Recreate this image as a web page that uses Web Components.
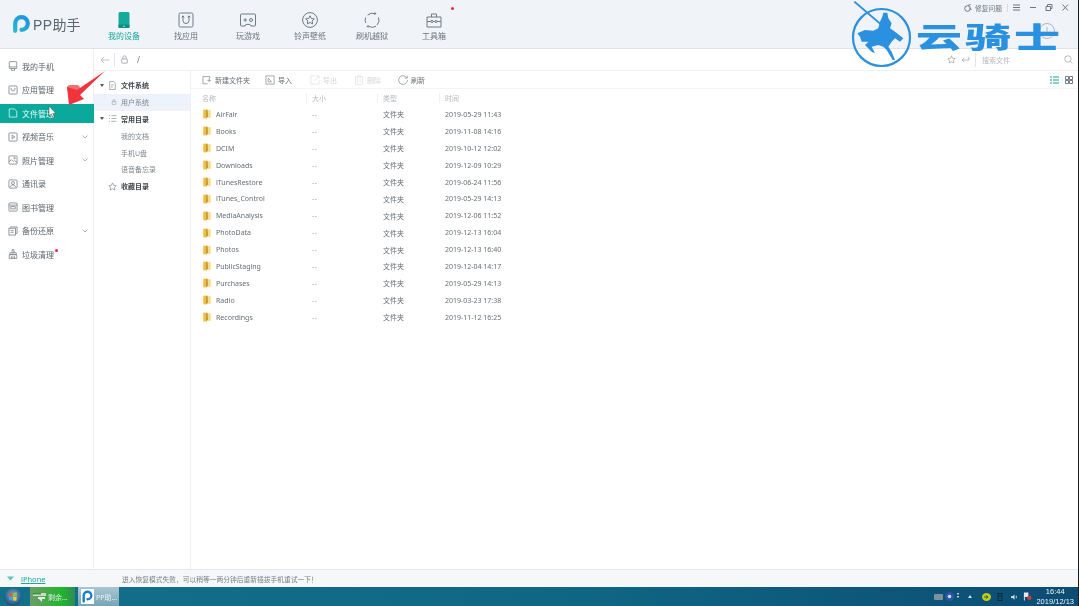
<!DOCTYPE html>
<html lang="zh">
<head>
<meta charset="utf-8">
<title>PP助手</title>
<style>
    html, body { margin: 0; height: 100%; background: #1a1a1a; overflow: hidden; }
    body { font-family: "Noto Sans", "Noto Sans CJK SC", sans-serif; font-size: 8px; color: #555; }
    #page { width: 1078px; height: 606px; display: flex; flex-direction: column; filter: blur(0.4px); background: #fff; position: relative; overflow: hidden; }
    #middle { flex: 1; display: flex; min-height: 0; }
</style>
</head>
<body>
<div id="page">
    <pp-topbar></pp-topbar>
    <div id="middle">
        <pp-sidebar></pp-sidebar>
        <pp-browser></pp-browser>
    </div>
    <pp-status></pp-status>
    <pp-taskbar></pp-taskbar>
    <pp-overlay></pp-overlay>
</div>

<script>
// all icons in one place, drawn on a 16x16 box unless the caller says otherwise
const ICONS = {
    device: '<rect x="2.5" y="0" width="11" height="16" rx="1.5" fill="#16a99c"/><rect x="2.5" y="12.6" width="11" height="3.4" rx="1" fill="#0b8f86"/><rect x="7" y="13.8" width="2" height="1" fill="#8fdcd5"/>',
    app: '<rect x="1" y="1" width="14" height="14" rx="1.5"/><path d="M5 4v4.5a3 3 0 0 0 6 0V4"/><path d="M3.8 5.4 5 3.8l1.2 1.6M9.8 5.4 11 3.8l1.2 1.6"/>',
    game: '<path d="M1.5 2h13a1 1 0 0 1 1 1v10a1 1 0 0 1-1 1h-3.5l-1-1.6H6L5 14H1.5a1 1 0 0 1-1-1V3a1 1 0 0 1 1-1z"/><path d="M3.5 8h3.4M5.2 6.3v3.4"/><circle cx="11" cy="8" r="1.5"/>',
    ring: '<circle cx="8" cy="8" r="7.4"/><path d="m8 3.8 1.3 2.7 3 .4-2.2 2 .6 3L8 10.5l-2.7 1.4.6-3-2.2-2 3-.4z"/>',
    flash: '<path d="M3.6 3.2A7 7 0 0 1 11 1.7M14.5 5.5a7 7 0 0 1-1.5 7.5M12 14.3A7 7 0 0 1 4.7 14.3M1.7 11a7 7 0 0 1 0-5.5"/><path d="m10.6 0 2 1.8-2.4 1.2zM4.5 16l-2.2-1.8 2.4-1.2z" fill="#6f7a82" stroke="none"/>',
    tools: '<path d="M1 5h14v10H1zM5.5 5V2h5v3M1 9.5h4M11 9.5h4M7.2 9.5h1.6"/><circle cx="6" cy="9.5" r="1.1"/><circle cx="10" cy="9.5" r="1.1"/>',
    phone: '<rect x="2" y="1" width="12" height="11" rx="1"/><path d="M5.5 12v3h5v-3M2 9.5h12"/>',
    bag: '<rect x="1.5" y="1.5" width="13" height="13" rx="1.5"/><path d="M5 4.5v2a3 3 0 0 0 6 0v-2"/>',
    file: '<path d="M2 1.5h8l4 3.5v9.5H2z"/>',
    play: '<rect x="1.5" y="1.5" width="13" height="13" rx="1"/><path d="m6.5 5 4.5 3-4.500 3z"/>',
    photo: '<rect x="1.5" y="1.5" width="13" height="13" rx="1"/><path d="m1.5 11 4-3.5 3 3 2-1.5 4 3"/><circle cx="10.5" cy="5" r="1.2"/>',
    contact: '<rect x="1.5" y="1.5" width="13" height="13" rx="1.5"/><circle cx="8" cy="6.5" r="2.4"/><path d="M3.8 13c.6-2.5 2.2-3.6 4.2-3.6s3.6 1.1 4.2 3.6"/>',
    book: '<rect x="1.5" y="1.5" width="13" height="13" rx="1"/><path d="M1.5 5h13"/><rect x="4.5" y="7.5" width="7" height="3.5"/>',
    backup: '<path d="M4 3V1.5h10.5V12H12"/><rect x="1.5" y="3.5" width="10.5" height="11"/><path d="M4 7h5M4 10h5"/>',
    clean: '<path d="M6.5 1h3v5h-3zM3 6h10v3H3zM2 9h12v6H2zM5.5 11.5V15M8 11.5V15M10.5 11.5V15"/>',
    doc: '<path d="M3 1h7l3 3v11H3z"/><path d="M5.5 7h5M5.5 10.5h3"/>',
    list: '<path d="M6 3h9M6 8h9M6 13h9"/><path d="M1.5 3h2M1.5 8h2M1.5 13h2"/>',
    star: '<path d="m8 1.5 2 4.300 4.700.6-3.400 3.200.9 4.700L8 12l-4.200 2.300.9-4.700L1.300 6.400 6 5.800z"/>',
    lock: '<rect x="3" y="7" width="10" height="7.5" rx="1"/><path d="M5 7V4.5a3 3 0 0 1 6 0V7"/>',
    back: '<path d="M15 8H1.5M6.5 3l-5 5 5 5"/>',
    enter: '<path d="M14 3v6H2M5.5 5.5 2 9l3.500 3.500"/>',
    search: '<circle cx="7" cy="7" r="5.7"/><path d="m11 11 4 4"/>',
    newdir: '<path d="M1.5 14V2.500h11v3M1.500 14H9"/><path d="M8.500 8.500h6M11.500 5.500v6"/>',
    import: '<rect x="1.5" y="1.5" width="13" height="13"/><path d="m5 5 5.500 5.500M5 5.500V11h5.500"/>',
    export: '<path d="M8 1.500H1.500v13h13V8"/><path d="m7 9 7.500-7.500M10 1.500h4.500V6"/>',
    trash: '<path d="M1 3.500h14M5.500 3.500V1.500h5v2M2.500 3.500V15h11V3.500M6 6.500v6M10 6.500v6"/>',
    refresh: '<path d="M14 4.500A7 7 0 1 0 15 8"/><path d="M14.800 1v4h-4"/>',
    folder: '<path d="M2 1h5.500v14H2z" fill="#eebf45"/><path d="M7 2h7v12H7z" fill="#f6dc8a"/><path d="M6.500 1H9l.6 11-3.100 3z" fill="#c9982c"/>'
};

function icon(name, size, color, width) {
    return `<svg viewBox="0 0 16 16" width="${size}" height="${size}" fill="none" stroke="${color || '#6f7a82'}" stroke-width="${width || 1}" style="display:block;flex:none">${ICONS[name]}</svg>`;
}

class PPTopbar extends HTMLElement {
    constructor() {
        super();
        const shadow = this.attachShadow({ mode: 'open' });
        const items = [
            ['device', '我的设备', true], ['app', '找应用'], ['game', '玩游戏'],
            ['ring', '铃声壁纸'], ['flash', '刷机越狱'], ['tools', '工具箱', false, true]
        ];
        shadow.innerHTML = `
            <style>
                :host { display: flex; flex: none; height: 49px; box-sizing: border-box; background: #f0f3f7; border-bottom: 1px solid #dfe3e8; }
                .logo { width: 93px; box-sizing: border-box; margin-top: 15px; padding-left: 13px; display: flex; gap: 3px; height: 18px; align-items: center; color: #5b6670; font-size: 14px; }
                .logo svg { display: block; flex: none; }
                .logo b { font-family: "Liberation Sans", sans-serif; font-weight: normal; letter-spacing: .4px; }
                nav { display: flex; }
                .item { width: 62px; display: flex; flex-direction: column; align-items: center; padding-top: 12px; gap: 2px; font-size: 8px; color: #6c757c; position: relative; }
                .item.on { color: #14a79a; }
                .dot { position: absolute; left: 48px; top: 7px; width: 3px; height: 3px; border-radius: 50%; background: #f0243a; }
                .right { margin-left: auto; padding: 3px 9px 0 0; display: flex; flex-direction: column; align-items: flex-end; }
                .controls { display: flex; align-items: center; color: #70777e; font-size: 6.75px; height: 9px; }
                .controls span.sep { width: 1px; height: 8px; background: #d8dce0; margin: 0 5px; }
                .controls svg { margin-right: 8px; }
                .controls svg:last-child { margin-right: 0; }
                .down { margin: 11px 14px 0 0; }
            </style>
            <div class="logo">
                <svg width="17" height="18" viewBox="0 0 17 18" fill="none"><defs><linearGradient id="lg" gradientUnits="userSpaceOnUse" x1="0" y1="18" x2="17" y2="0"><stop offset="0" stop-color="#2cbccb"/><stop offset="1" stop-color="#1b8de6"/></linearGradient></defs><path d="M2.2 15.8V8.500a6.300 6.300 0 1 1 6.300 6.300" stroke="url(#lg)" stroke-width="4.2" stroke-linecap="round"/></svg>
                <span><b>PP</b>助手</span>
            </div>
            <nav>${items.map(([ic, label, on, dot]) => `
                <div class="item ${on ? 'on' : ''}">
                    ${ic === 'device' ? icon(ic, 16, 'none') : icon(ic, 16)}
                    <span>${label}</span>
                    ${dot ? '<i class="dot"></i>' : ''}
                </div>`).join('')}
            </nav>
            <div class="right">
                <div class="controls">
                    <svg style="margin-right:3px" width="8" height="8" viewBox="0 0 8 8" fill="none" stroke="#70777e"><circle cx="3.5" cy="4.5" r="2.8"/><path d="M4 1.5 6.500.5M5.500 4 7.500 6"/></svg>
                    <span>修复问题</span><span class="sep"></span>
                    <svg width="8" height="7" viewBox="0 0 8 7" stroke="#70777e"><path d="M0 1h7M0 3.500h7M0 6h7"/></svg>
                    <svg width="8" height="7" viewBox="0 0 8 7" stroke="#70777e"><path d="M1 3.500h6"/></svg>
                    <svg width="8" height="7" viewBox="0 0 8 7" fill="none" stroke="#70777e"><path d="M1 2.500h4.500v4H1zM2.500 2.500V.5H7v4H5.500"/></svg>
                    <svg width="8" height="7" viewBox="0 0 8 7" stroke="#70777e"><path d="m1.500 .5 5.500 6M7 .5l-5.500 6"/></svg>
                </div>
                <svg class="down" width="16" height="16" viewBox="0 0 16 16" fill="none" stroke="#b0b6bc"><circle cx="8" cy="8" r="7.5"/><path d="M8 4v7M5 8.500l3 3 3-3"/></svg>
            </div>
        `;
    }
}

class PPSidebar extends HTMLElement {
    constructor() {
        super();
        const shadow = this.attachShadow({ mode: 'open' });
        const items = [
            ['phone', '我的手机'], ['bag', '应用管理'], ['file', '文件管理'], ['play', '视频音乐', 'more'],
            ['photo', '照片管理', 'more'], ['contact', '通讯录'], ['book', '图书管理'],
            ['backup', '备份还原', 'more'], ['clean', '垃圾清理']
        ];
        shadow.innerHTML = `
            <style>
                :host { display: block; flex: none; width: 94px; box-sizing: border-box; padding-top: 5.5px; border-right: 1px solid #eef0f3; color: #596269; font-size: 8px; }
                .row { height: 23.5px; display: flex; align-items: center; padding: 0 3px 0 8px; gap: 4px; position: relative; box-sizing: border-box; }
                .row.on { background: #0aa99b; color: #e8fbf8; margin-right: -1px; height: 19.5px; margin-top: 2px; margin-bottom: 2px; }
                .chev { margin-left: auto; margin-right: 2px; }
                .badge { position: absolute; left: 67px; top: 7px; width: 13px; height: 7px; border-radius: 4px; background: #ef6f6a; }
                .dot { position: absolute; left: 55px; top: 6px; width: 3px; height: 3px; border-radius: 50%; background: #f0243a; }
            </style>
            ${items.map(([ic, label, more], i) => `
                <div class="row ${i === 2 ? 'on' : ''}">
                    ${icon(ic, 10, i === 2 ? '#d7f5f1' : '#7b848b', 1.3)}
                    <span>${label}</span>
                    ${more ? '<svg class="chev" width="6" height="4" viewBox="0 0 6 4" fill="none" stroke="#b0b6bb"><path d="m.5.5 2.500 2.500L5.500.5"/></svg>' : ''}
                    ${i === 1 ? '<i class="badge"></i>' : ''}
                    ${i === 8 ? '<i class="dot"></i>' : ''}
                </div>`).join('')}
        `;
    }
}

class PPBrowser extends HTMLElement {
    constructor() {
        super();
        const shadow = this.attachShadow({ mode: 'open' });
        shadow.innerHTML = `
            <style>
                :host { display: flex; flex-direction: column; flex: 1; min-width: 0; }
                .address { flex: none; height: 22px; box-sizing: border-box; border-bottom: 1px solid #eef0f3; display: flex; align-items: center; padding: 0 5px 0 6px; color: #777; font-size: 8px; }
                .address .sep { width: 1px; height: 14px; background: #e2e5e8; }
                .tail { margin-left: auto; display: flex; align-items: center; }
                .search { color: #b4b9be; font-size: 7px; width: 82px; margin-left: 6px; }
                .panes { flex: 1; display: flex; min-height: 0; }
            </style>
            <div class="address">
                ${icon('back', 10, '#9aa1a7')}
                <span class="sep" style="margin:0 5px 0 4px"></span>
                ${icon('lock', 9, '#6f7a82')}
                <span style="margin-left:8px">/</span>
                <div class="tail">
                    ${icon('star', 9, '#868d93')}
                    <span style="width:5px"></span>
                    ${icon('enter', 9, '#868d93')}
                    <span class="sep" style="margin-left:5px"></span>
                    <span class="search">搜索文件</span>
                    ${icon('search', 9, '#868d93')}
                </div>
            </div>
            <div class="panes">
                <pp-tree></pp-tree>
                <pp-files></pp-files>
            </div>
        `;
    }
}

class PPTree extends HTMLElement {
    constructor() {
        super();
        const shadow = this.attachShadow({ mode: 'open' });
        const rows = [
            ['head', '文件系统', 'doc', true], ['sel', '用户系统', 'lock'], ['head', '常用目录', 'list', true],
            ['sub', '我的文档'], ['sub', '手机U盘'], ['sub', '语音备忘录'], ['head', '收藏目录', 'star']
        ];
        shadow.innerHTML = `
            <style>
                :host { display: block; flex: none; width: 97px; box-sizing: border-box; padding-top: 6px; border-right: 1px solid #eef0f3; font-size: 7px; color: #7e868c; }
                .row { height: 16.8px; display: flex; align-items: center; box-sizing: border-box; }
                .head { color: #3e454b; font-weight: bold; padding-left: 6px; }
                .sel { background: #eef2fb; padding-left: 17px; }
                .sub { padding-left: 27px; }
                .tri { width: 0; height: 0; border: 2.5px solid transparent; border-top: 3px solid #555; border-bottom: 0; margin-right: 4px; }
                .tri.off { visibility: hidden; }
                .row svg { margin-right: 4px; }
            </style>
            ${rows.map(([kind, label, ic, open]) => `
                <div class="row ${kind}">
                    ${kind === 'head' ? `<i class="tri ${open ? '' : 'off'}"></i>` : ''}
                    ${ic ? icon(ic, kind === 'sel' ? 6 : 9, '#6a7279') : ''}
                    <span>${label}</span>
                </div>`).join('')}
        `;
    }
}

class PPFiles extends HTMLElement {
    constructor() {
        super();
        const shadow = this.attachShadow({ mode: 'open' });
        const tools = [
            ['newdir', '新建文件夹', 15], ['import', '导入', 18], ['export', '导出', 17, true],
            ['trash', '删除', 17, true], ['refresh', '刷新', 0]
        ];
        const files = [
            ['AirFair', '2019-05-29 11:43'], ['Books', '2019-11-08 14:16'], ['DCIM', '2019-10-12 12:02'],
            ['Downloads', '2019-12-09 10:29'], ['iTunesRestore', '2019-06-24 11:56'], ['iTunes_Control', '2019-05-29 14:13'],
            ['MediaAnalysis', '2019-12-06 11:52'], ['PhotoData', '2019-12-13 16:04'], ['Photos', '2019-12-13 16:40'],
            ['PublicStaging', '2019-12-04 14:17'], ['Purchases', '2019-05-29 14:13'], ['Radio', '2019-03-23 17:38'],
            ['Recordings', '2019-11-12 16:25']
        ];
        shadow.innerHTML = `
            <style>
                :host { display: block; flex: 1; min-width: 0; font-size: 7px; color: #666e74; }
                .tools { height: 18px; box-sizing: border-box; border-bottom: 1px solid #f3f4f6; display: flex; align-items: center; padding: 0 5px 0 11px; }
                .tool { display: flex; align-items: center; gap: 3px; }
                .tool.off { color: #d4d7da; }
                .views { margin-left: auto; display: flex; gap: 6px; }
                .grid { display: grid; grid-template-columns: 110px 71px 62px 1fr; align-items: center; height: 16.9px; padding-left: 11px; }
                .head { color: #b3b8bc; height: 17px; }
                .head span + span { border-left: 1px solid #f0f1f3; margin-left: -6px; padding-left: 5px; }
                .name { display: flex; align-items: center; gap: 4px; }
                .size { color: #999; letter-spacing: .6px; }
            </style>
            <div class="tools">
                ${tools.map(([ic, label, gap, off]) => `
                    <div class="tool ${off ? 'off' : ''}" style="margin-right:${gap}px">
                        ${icon(ic, 10, off ? '#d9dcdf' : '#6f7a82')}<span>${label}</span>
                    </div>`).join('')}
                <div class="views">
                    <svg width="9" height="8" viewBox="0 0 9 8" stroke="#14a79a"><path d="M3 1h6M3 4h6M3 7h6M0 1h2M0 4h2M0 7h2"/></svg>
                    <svg width="8" height="8" viewBox="0 0 8 8" fill="none" stroke="#6f7a82"><path d="M.5.5h3v3h-3zM4.500.5h3v3h-3zM.5 4.500h3v3h-3zM4.500 4.500h3v3h-3z"/></svg>
                </div>
            </div>
            <div class="grid head"><span>名称</span><span>大小</span><span>类型</span><span>时间</span></div>
            ${files.map(([name, time]) => `
                <div class="grid">
                    <span class="name">${icon('folder', 10, 'none')}<span>${name}</span></span>
                    <span class="size">--</span><span>文件夹</span><span>${time}</span>
                </div>`).join('')}
        `;
    }
}

class PPStatus extends HTMLElement {
    constructor() {
        super();
        this.attachShadow({ mode: 'open' }).innerHTML = `
            <style>
                :host { display: flex; flex: none; height: 18px; box-sizing: border-box; align-items: center; background: #f6f7f9; border-top: 1px solid #e4e6e9; font-size: 6.75px; color: #777f85; padding-left: 7px; }
                a { color: #19a89b; text-decoration: underline; margin-left: 7px; width: 101px; font-size: 7.5px; }
            </style>
            <svg width="7" height="5" viewBox="0 0 7 5"><path d="M0 .5h7L3.500 4.500z" fill="#5cc4ba"/></svg>
            <a>iPhone</a>
            <span>进入恢复模式失败，可以稍等一两分钟后重新插拔手机重试一下！</span>
        `;
    }
}

class PPTaskbar extends HTMLElement {
    constructor() {
        super();
        this.attachShadow({ mode: 'open' }).innerHTML = `
            <style>
                :host { display: flex; flex: none; height: 19px; background: linear-gradient(90deg, #12708a, #0f6683 55%, #0c4c74); font-size: 7px; color: #dfeaf0; align-items: center; }
                .orb { margin: 0 8px 0 4px; display: block; flex: none; }
                .task { height: 19px; box-sizing: border-box; display: flex; align-items: center; gap: 2px; padding-left: 3px; white-space: nowrap; overflow: hidden; }
                .green { width: 45px; margin-right: 3px; background: linear-gradient(90deg, #6d9d69, #22b52b 70%, #2c8c58); }
                .pp { width: 41px; background: linear-gradient(#a9c6d2, #77a5b7); color: #e9f2f5; }
                .tray { margin-left: auto; display: flex; align-items: center; padding-right: 4px; }
                .clock { text-align: center; line-height: 10px; margin-left: 4px; font-family: "Liberation Sans", sans-serif; font-size: 7.5px; color: #eef4f7; }
            </style>
            <svg class="orb" width="18" height="18" viewBox="0 0 18 18">
                <defs><radialGradient id="og" cx=".5" cy=".4" r=".6"><stop offset="0" stop-color="#6fb2dc"/><stop offset="1" stop-color="#1d4a73"/></radialGradient></defs>
                <circle cx="9" cy="9" r="8.8" fill="url(#og)"/>
                <path d="M5 5.500 8.500 5v3.300H5.200z" fill="#e4572e"/><path d="M9.200 4.900 13 4.300l-.3 3.900H9.200z" fill="#8cc63f"/><path d="M5.200 9h3.300v3.300L5 11.800z" fill="#4a9de0"/><path d="M9.200 9h3.500l-.3 3.800-3.200-.4z" fill="#f7c93b"/>
            </svg>
            <div class="task green">
                <svg width="13" height="10" viewBox="0 0 13 10"><path d="M0 1h13v3H0z" fill="#cfd8cf"/><path d="M0 1h8v1.500H0z" fill="#2f9c3a"/><path d="M5 5h7v2l-3 0v3l-3-3H5z" fill="#e3e8e3"/></svg>
                <span>剩余...</span>
            </div>
            <div class="task pp">
                <svg width="13" height="15" viewBox="0 0 13 15" fill="none"><rect width="13" height="15" fill="#fff"/><path d="M2.700 12.500V6.500a3.800 3.800 0 1 1 3.800 3.800" stroke="#1e7fcf" stroke-width="2.400" stroke-linecap="round"/></svg>
                <span>PP助...</span>
            </div>
            <div class="tray">
                <svg style="margin-right:2px" width="9" height="6" viewBox="0 0 9 6"><rect width="9" height="6" rx="1" fill="#7c929c"/></svg>
                <svg style="margin-right:3px" width="9" height="9" viewBox="0 0 9 9"><circle cx="4.5" cy="4.5" r="4.5" fill="#2957a8"/><circle cx="4.5" cy="4.5" r="1.8" fill="#cfdcf0"/></svg>
                <svg style="margin-right:9px" width="2" height="7" viewBox="0 0 2 7" fill="#b9ccd5"><path d="M0 0h2v1.500H0zM0 3h2v1.500H0z"/></svg>
                <svg style="margin-right:10px" width="4" height="3" viewBox="0 0 4 3"><path d="M2 0 4 3H0z" fill="#cfe0e8"/></svg>
                <svg style="margin-right:5px" width="9" height="8" viewBox="0 0 9 8"><ellipse cx="4.5" cy="4" rx="4.5" ry="4" fill="#c6c91e"/><path d="M2 4h4M4 2.500 6 4 4 5.500" stroke="#23702b" fill="none"/></svg>
                <svg style="margin-right:7px" width="8" height="8" viewBox="0 0 8 8" fill="none" stroke="#0c2c3d"><path d="M1 .5h6M1 7.500h6M2 .5v7M6 .5v7M2 3h4"/></svg>
                <svg style="margin-right:5px" width="7" height="8" viewBox="0 0 8 8" fill="#d8e4ea"><path d="M0 3h2l2-2v6L2 5H0zM5.500 2.500h1v3h-1z"/></svg>
                <svg width="9" height="9" viewBox="0 0 10 9"><path d="M1 0h5v5H2v4H1z" fill="#e5e9eb"/><circle cx="7" cy="6" r="2.500" fill="#d23a34"/></svg>
                <div class="clock">16:44<br>2019/12/13</div>
            </div>
        `;
    }
}

// annotations laid over the screenshot: red arrow, mouse pointer, watermark
class PPOverlay extends HTMLElement {
    constructor() {
        super();
        this.attachShadow({ mode: 'open' }).innerHTML = `
            <style>
                :host { position: absolute; left: 0; top: 0; width: 100%; height: 100%; pointer-events: none; display: block; }
                svg { position: absolute; left: 0; top: 0; }
                .mark { position: absolute; left: 916px; top: 24px; font: 900 46px/29px "Liberation Sans", "Noto Sans CJK SC", sans-serif; letter-spacing: 3px; color: #2a90e0; white-space: nowrap; transform: scaleY(.63); transform-origin: left center; }
            </style>
            <svg width="1078" height="606" viewBox="0 0 1078 606">
                <path d="M105 71 77 90 67 87 69 105 84 99 80 95z" fill="#f2333b"/>
                <path d="M49 106v10l2.300-2 1.500 3.500 1.500-.7-1.500-3.400h3z" fill="#fff" stroke="#555" stroke-width=".6"/>
                <circle cx="881.5" cy="37.5" r="28.5" fill="none" stroke="#2a90e0" stroke-width="2.2"/>
                <g transform="translate(850 0) scale(.3333)" fill="#2a90e0">
                    <path d="M15 3 137 107l-4 4L11 7z"/>
                    <path d="M22 100 45 90 70 92 85 85 90 65 97 50 100 38 112 38 115 55 125 70 120 85 135 95 160 115 150 125 135 115 125 125 115 140 125 155 135 180 128 180 110 150 100 140 85 135 65 140 75 160 65 155 45 135 55 125 35 125 30 110z"/>
                </g>
            </svg>
            <div class="mark">云骑士</div>
        `;
    }
}

customElements.define('pp-topbar', PPTopbar);
customElements.define('pp-sidebar', PPSidebar);
customElements.define('pp-browser', PPBrowser);
customElements.define('pp-tree', PPTree);
customElements.define('pp-files', PPFiles);
customElements.define('pp-status', PPStatus);
customElements.define('pp-taskbar', PPTaskbar);
customElements.define('pp-overlay', PPOverlay);
</script>
</body>
</html>
